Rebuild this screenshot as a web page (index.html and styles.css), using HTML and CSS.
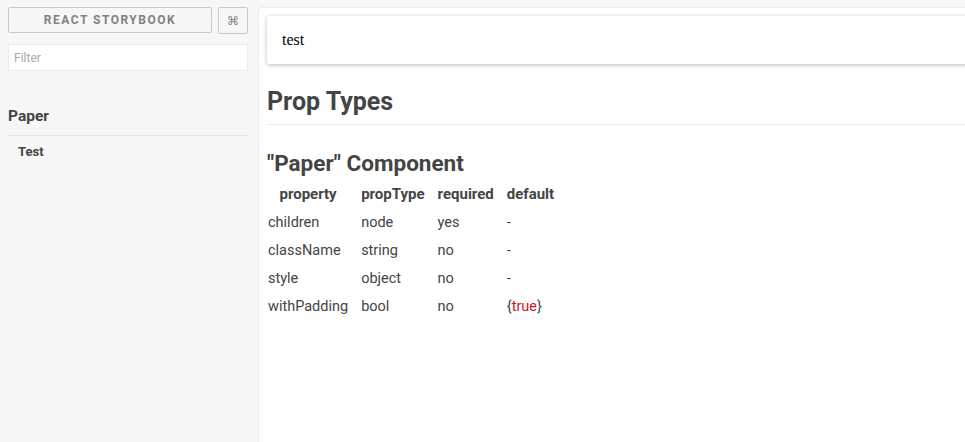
FILE: index.html
```html
<!DOCTYPE html>
<html>
<head>
<meta charset="utf-8">
<link rel="stylesheet" href="styles.css">
</head>
<body>
<div class="app">
  <aside class="sidebar">
    <div class="top-row">
      <button class="brand">REACT STORYBOOK</button>
      <button class="shortcut">⌘</button>
    </div>
    <input class="filter" type="text" placeholder="Filter">
    <div class="kind">Paper</div>
    <div class="story">Test</div>
  </aside>
  <main class="main">
    <div class="preview">
      <div class="paper">test</div>
      <h1 class="h1">Prop Types</h1>
      <h2 class="h2">"Paper" Component</h2>
      <table class="props">
        <thead>
          <tr><th>property</th><th>propType</th><th>required</th><th>default</th></tr>
        </thead>
        <tbody>
          <tr><td>children</td><td>node</td><td>yes</td><td>-</td></tr>
          <tr><td>className</td><td>string</td><td>no</td><td>-</td></tr>
          <tr><td>style</td><td>object</td><td>no</td><td>-</td></tr>
          <tr><td>withPadding</td><td>bool</td><td>no</td><td>{<span class="val">true</span>}</td></tr>
        </tbody>
      </table>
    </div>
  </main>
</div>
</body>
</html>
```
FILE: styles.css
```css
html, body {
  margin: 0;
  padding: 0;
  height: 100%;
  overflow: hidden;
  background: #f7f7f7;
}
.app {
  display: flex;
  height: 100%;
  font-family: Roboto, "Liberation Sans", sans-serif;
  color: #444;
}
.sidebar {
  width: 240px;
  flex: none;
  padding: 7px 2px 0 8px;
  display: flex;
  flex-direction: column;
}
.top-row {
  display: flex;
  gap: 6px;
}
.brand {
  flex: 1;
  height: 26px;
  margin: 0;
  padding: 0;
  background: transparent;
  border: 1px solid #c9c9c9;
  border-radius: 2px;
  font-family: Roboto, "Liberation Sans", sans-serif;
  font-weight: 700;
  font-size: 12px;
  letter-spacing: 1.5px;
  color: #828282;
}
.shortcut {
  width: 30px;
  height: 27px;
  margin: 0;
  padding: 0;
  background: transparent;
  border: 1px solid #c9c9c9;
  border-radius: 2px;
  font-family: "DejaVu Sans", sans-serif;
  font-size: 12px;
  color: #828282;
}
.filter {
  margin-top: 10px;
  height: 27px;
  box-sizing: border-box;
  border: 1px solid #ededed;
  background: #fff;
  padding: 0 5px;
  font-family: Roboto, "Liberation Sans", sans-serif;
  font-size: 12px;
  color: #444;
  outline: none;
}
.filter::placeholder {
  color: #aaa;
}
.kind {
  margin-top: 36px;
  font-size: 15.5px;
  line-height: 18px;
  font-weight: 700;
  padding-bottom: 10px;
  border-bottom: 1px solid #e8e8e8;
}
.story {
  margin-top: 8px;
  padding-left: 10px;
  font-size: 13px;
  line-height: 16px;
  font-weight: 700;
}
.main {
  flex: 1;
  padding: 7px 0 0 8px;
  min-width: 0;
}
.preview {
  width: 760px;
  height: 500px;
  background: #fff;
  border: 1px solid #ececec;
  border-radius: 4px;
  padding: 8px;
  box-sizing: border-box;
}
.paper {
  background: #fff;
  border-radius: 2px;
  box-shadow: 0 1px 4px rgba(0, 0, 0, 0.28);
  padding: 15px 15px;
  height: 48px;
  box-sizing: border-box;
  font-family: "Liberation Serif", serif;
  font-size: 16px;
  line-height: 18px;
  color: #000;
}
.h1 {
  margin: 23px 0 0;
  font-size: 25px;
  line-height: 29px;
  font-weight: 700;
  padding-bottom: 8px;
  border-bottom: 1px solid #eaeaea;
}
.h2 {
  margin: 25px 0 0;
  font-size: 22.5px;
  line-height: 26px;
  font-weight: 700;
}
.props {
  margin-top: 5px;
  border-collapse: collapse;
  font-size: 14.5px;
}
.props th, .props td {
  padding: 0 12px 0 1px;
  height: 28px;
  line-height: 28px;
  white-space: nowrap;
}
.props th {
  font-size: 15px;
  font-weight: 700;
  height: 28px;
  line-height: 27px;
  vertical-align: top;
}
.props td {
  text-align: left;
}
.val {
  color: #d0171e;
}
```
